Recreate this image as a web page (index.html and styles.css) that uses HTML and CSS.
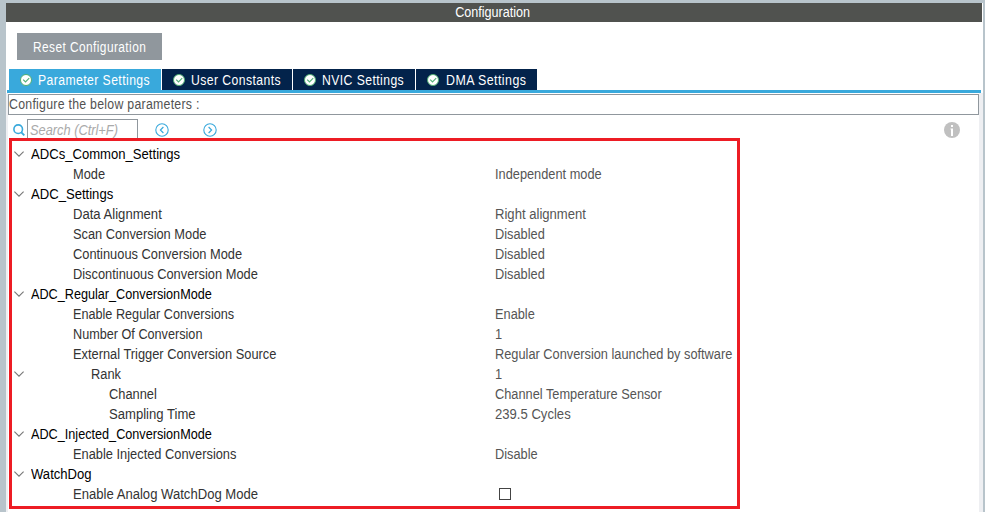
FILE: index.html
```html
<!DOCTYPE html>
<html lang="en">
<head>
<meta charset="utf-8">
<title>Configuration</title>
<link rel="stylesheet" href="styles.css">
</head>
<body>
<svg class="defs" width="0" height="0">
  <symbol id="ok" viewBox="0 0 12 12"><circle cx="6" cy="6" r="5.5" fill="#fff" stroke="#4fae72" stroke-width="1"/><path d="M3.2 5.6 5.5 7.9 9.2 4.2" fill="none" stroke="#55b078" stroke-width="1.2"/></symbol>
  <symbol id="chev" viewBox="0 0 10 6"><path d="M.4.6 5 5.2 9.6.6" fill="none" stroke="#777" stroke-width="1.1"/></symbol>
</svg>
<main class="window">
  <header class="title"><span>Configuration</span></header>
  <div class="toolbar"><button class="reset"><span>Reset Configuration</span></button></div>
  <nav class="tabs">
    <div class="tab tab-params active"><svg><use href="#ok"/></svg><span>Parameter Settings</span></div>
    <div class="tab tab-user"><svg><use href="#ok"/></svg><span>User Constants</span></div>
    <div class="tab tab-nvic"><svg><use href="#ok"/></svg><span>NVIC Settings</span></div>
    <div class="tab tab-dma"><svg><use href="#ok"/></svg><span>DMA Settings</span></div>
  </nav>
  <section class="panel">
    <div class="hint"><span>Configure the below parameters :</span></div>
    <div class="search">
      <svg class="glass" viewBox="0 0 12 12"><circle cx="5.2" cy="5.2" r="4.3" fill="none" stroke="#39a9dc" stroke-width="1.6"/><path d="M8 8 11.3 11.3" stroke="#39a9dc" stroke-width="1.8"/></svg>
      <div class="field"><span>Search (Ctrl+F)</span></div>
      <svg class="nav prev" viewBox="0 0 14 14"><circle cx="7" cy="7" r="6.2"/><path d="M8.4 4 5.4 7 8.4 10"/></svg>
      <svg class="nav next" viewBox="0 0 14 14"><circle cx="7" cy="7" r="6.2"/><path d="M5.6 4 8.6 7 5.6 10"/></svg>
      <svg class="info" viewBox="0 0 16 16"><circle cx="8" cy="8" r="8" fill="#c0c0c0"/><path d="M7 3h2v2H7zM6.5 6.5H9V14H7V7.5h-.5z" fill="#fff"/></svg>
    </div>
    <div class="tree">
      <div class="row group"><svg><use href="#chev"/></svg><span class="name wide">ADCs_Common_Settings</span></div>
      <div class="row"><span class="name">Mode</span><span class="value">Independent mode</span></div>
      <div class="row group"><svg><use href="#chev"/></svg><span class="name wide">ADC_Settings</span></div>
      <div class="row"><span class="name wide">Data Alignment</span><span class="value wide">Right alignment</span></div>
      <div class="row"><span class="name">Scan Conversion Mode</span><span class="value">Disabled</span></div>
      <div class="row"><span class="name">Continuous Conversion Mode</span><span class="value">Disabled</span></div>
      <div class="row"><span class="name">Discontinuous Conversion Mode</span><span class="value">Disabled</span></div>
      <div class="row group"><svg><use href="#chev"/></svg><span class="name tight">ADC_Regular_ConversionMode</span></div>
      <div class="row"><span class="name tight">Enable Regular Conversions</span><span class="value">Enable</span></div>
      <div class="row"><span class="name tight">Number Of Conversion</span><span class="value">1</span></div>
      <div class="row"><span class="name">External Trigger Conversion Source</span><span class="value">Regular Conversion launched by software</span></div>
      <div class="row rank"><svg><use href="#chev"/></svg><span class="name">Rank</span><span class="value">1</span></div>
      <div class="row sub"><span class="name">Channel</span><span class="value">Channel Temperature Sensor</span></div>
      <div class="row sub"><span class="name wide">Sampling Time</span><span class="value wide">239.5 Cycles</span></div>
      <div class="row group"><svg><use href="#chev"/></svg><span class="name tight">ADC_Injected_ConversionMode</span></div>
      <div class="row"><span class="name">Enable Injected Conversions</span><span class="value">Disable</span></div>
      <div class="row group"><svg><use href="#chev"/></svg><span class="name wide">WatchDog</span></div>
      <div class="row"><span class="name wide">Enable Analog WatchDog Mode</span><i class="checkbox"></i></div>
    </div>
  </section>
</main>
</body>
</html>
```
FILE: styles.css
```css
* { box-sizing: border-box; }
body {
  margin: 0;
  height: 512px;
  overflow: hidden;
  background: #b8c4cb;
  font: 14px/20px "Liberation Sans", Arial, sans-serif;
  color: #333;
  white-space: nowrap;
}
svg { display: block; flex: none; }
.defs { position: absolute; }
.window {
  margin: 3px 2px 0 6px;
  height: 509px;
  background: #fff;
  display: flex;
  flex-direction: column;
}
.title {
  height: 19px;
  margin-right: 1px;
  background: #50524f;
  color: #fff;
  line-height: 19px;
  text-align: center;
}
.title span { display: inline-block; transform: translateX(-1px) scaleX(.9); }
.toolbar { height: 47px; padding: 11px 0 0 11px; }
.reset {
  display: block;
  width: 145px;
  height: 27px;
  border: 0;
  padding: 0;
  background: #90979d;
  color: #fff;
  font: inherit;
  letter-spacing: .5px;
}
.reset span { display: inline-block; margin: 0 -10px; transform: scaleX(.85); }
.tabs {
  display: flex;
  gap: 1px;
  height: 24px;
  margin: 0 2px 0 1px;
  padding-left: 2px;
  border-bottom: 3px solid #39a9dc;
}
.tab {
  display: flex;
  align-items: center;
  height: 21px;
  background: #03234b;
  color: #fff;
  letter-spacing: .5px;
  padding-left: 11px;
  gap: 6px;
}
.tab span { flex: none; transform: scaleX(.87); transform-origin: left; }
.tab svg { width: 12px; height: 12px; }
.tab.active { background: #39a9dc; }
.tab-params { width: 152px; }
.tab-user { width: 130px; }
.tab-nvic { width: 122px; }
.tab-dma { width: 121px; gap: 7px; }
.tab-dma span { transform: scaleX(.885); }
.panel {
  flex: 1;
  border-left: 2px solid #eeeff2;
  border-right: 4px solid #eeeff2;
  padding-top: 1px;
}
.hint {
  height: 21px;
  border: 1px solid #90979d;
  line-height: 19px;
  color: #525252;
}
.hint span { display: inline-block; letter-spacing: .3px; transform: scaleX(.88); transform-origin: left; }
.search {
  display: flex;
  align-items: flex-start;
  height: 23px;
  padding: 4px 0 0 5px;
}
.glass { width: 12px; height: 12px; margin-top: 5px; }
.field {
  width: 111px;
  height: 23px;
  margin-left: 2px;
  border: 1px solid #90979d;
  padding-left: 2px;
  font-style: italic;
  color: #aaa;
}
.field span { display: inline-block; transform: scaleX(.915); transform-origin: left; }
.nav { width: 14px; height: 14px; margin-top: 4px; fill: none; stroke: #39a9dc; stroke-width: 1.1; }
.nav path { stroke-width: 1.2; }
.prev { margin-left: 17px; }
.next { margin-left: 34px; }
.info { width: 16px; height: 16px; margin: 3px 19px 0 auto; }
.tree {
  position: relative;
  width: 731px;
  height: 371px;
  margin-left: 1px;
  border: 3px solid #ed1c24;
  padding-top: 3px;
  background: #fff;
}
.row {
  display: grid;
  grid-template-columns: 19px 464px 1fr;
  align-items: center;
  height: 20px;
}
.row svg { grid-column: 1; width: 10px; height: 6px; margin-left: 2px; }
.name { grid-column: 2; justify-self: start; margin-left: 42px; transform: scaleX(.917); transform-origin: left; }
.value { grid-column: 3; justify-self: start; color: #555; transform: scaleX(.913); transform-origin: left; }
.group .name { margin-left: 0; color: #000; }
.rank .name { margin-left: 60px; }
.sub .name { margin-left: 78px; }
.name.tight { transform: scaleX(.904); }
.name.wide, .value.wide { transform: scaleX(.935); }
.checkbox { grid-column: 3; width: 12px; height: 12px; margin-left: 4px; border: 1px solid #444; }
```
